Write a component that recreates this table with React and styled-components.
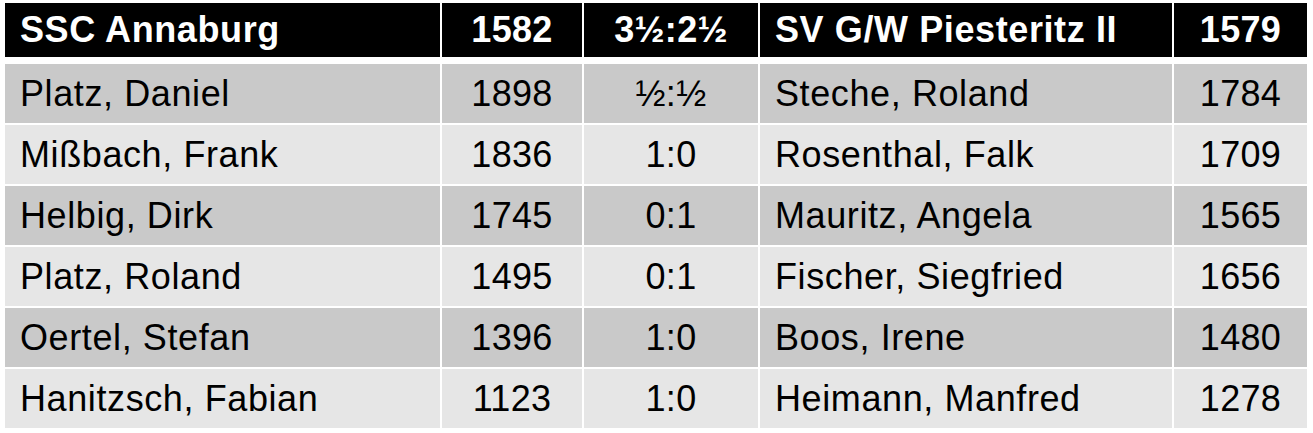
import React from "react";
import styled, { createGlobalStyle } from "styled-components";

const GlobalStyle = createGlobalStyle`
  html, body {
    margin: 0;
    padding: 0;
    background: #ffffff;
  }
  body {
    font-family: "Liberation Sans", Arial, sans-serif;
  }
`;

const Page = styled.div`
  padding: 3px 6px 0 5px;
`;

const Grid = styled.div`
  display: grid;
  grid-template-columns: 435px 140px 174px 412px 133px;
  grid-template-rows: 59px;
  grid-auto-rows: 59px;
  column-gap: 2px;
  row-gap: 2px;
`;

const Cell = styled.div`
  display: flex;
  align-items: center;
  justify-content: ${(p) => (p.$center ? "center" : "flex-start")};
  padding: 0 ${(p) => (p.$center ? "0" : "15px")};
  font-size: 36px;
  letter-spacing: ${(p) => (p.$center ? "0.3px" : "0.6px")};
  line-height: 1;
  white-space: nowrap;
  background: ${(p) => p.$bg};
  color: #000;
`;

const HeadCell = styled(Cell)`
  background: #000;
  color: #fff;
  font-weight: bold;
  margin-bottom: 5px;
`;

const header = ["SSC Annaburg", "1582", "3½:2½", "SV G/W Piesteritz II", "1579"];

const games = [
  ["Platz, Daniel", "1898", "½:½", "Steche, Roland", "1784"],
  ["Mißbach, Frank", "1836", "1:0", "Rosenthal, Falk", "1709"],
  ["Helbig, Dirk", "1745", "0:1", "Mauritz, Angela", "1565"],
  ["Platz, Roland", "1495", "0:1", "Fischer, Siegfried", "1656"],
  ["Oertel, Stefan", "1396", "1:0", "Boos, Irene", "1480"],
  ["Hanitzsch, Fabian", "1123", "1:0", "Heimann, Manfred", "1278"],
];

const centered = [false, true, true, false, true];

export default function App() {
  return (
    <>
      <GlobalStyle />
      <Page>
        <Grid>
          {header.map((h, i) => (
            <HeadCell key={"h" + i} $center={centered[i]}>
              {h}
            </HeadCell>
          ))}
          {games.map((row, r) =>
            row.map((v, i) => (
              <Cell
                key={r + "-" + i}
                $center={centered[i]}
                $bg={r % 2 === 0 ? "#c9c9c9" : "#e6e6e6"}
              >
                {v}
              </Cell>
            ))
          )}
        </Grid>
      </Page>
    </>
  );
}
